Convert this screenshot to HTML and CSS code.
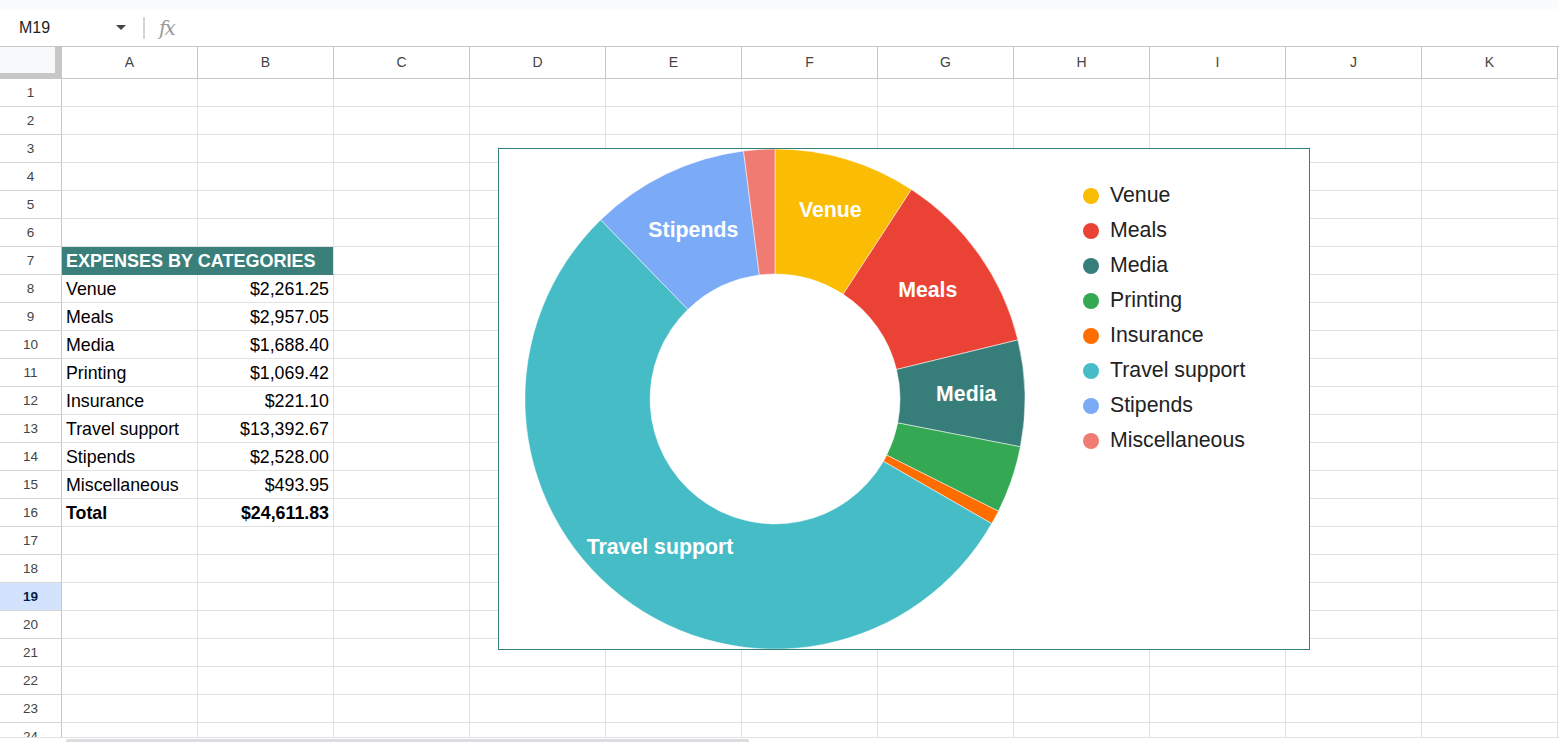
FILE: index.html
```html
<!DOCTYPE html>
<html lang="en">
    <head>
        <meta charset="UTF-8" />
        <meta name="viewport" content="width=device-width, initial-scale=1.0" />
        <title>Expenses</title>
        <link rel="stylesheet" href="styles.css">
    </head>
    <body>
        <div class="top-strip"></div>
        <!-- name box + formula input -->
        <div class="formula-bar">
            <span class="name-box">M19</span>
            <span class="caret"></span>
            <span class="divider"></span>
            <span class="fx">fx</span>
        </div>

        <div class="sheet">
            <div class="row col-heads">
                <div class="corner"></div>
                <div>A</div><div>B</div><div>C</div><div>D</div><div>E</div><div>F</div>
                <div>G</div><div>H</div><div>I</div><div>J</div><div>K</div>
            </div>
            <div class="row"><div class="rh">1</div><div></div><div></div><div></div><div></div><div></div><div></div><div></div><div></div><div></div><div></div><div></div></div>
            <div class="row"><div class="rh">2</div><div></div><div></div><div></div><div></div><div></div><div></div><div></div><div></div><div></div><div></div><div></div></div>
            <div class="row"><div class="rh">3</div><div></div><div></div><div></div><div></div><div></div><div></div><div></div><div></div><div></div><div></div><div></div></div>
            <div class="row"><div class="rh">4</div><div></div><div></div><div></div><div></div><div></div><div></div><div></div><div></div><div></div><div></div><div></div></div>
            <div class="row"><div class="rh">5</div><div></div><div></div><div></div><div></div><div></div><div></div><div></div><div></div><div></div><div></div><div></div></div>
            <div class="row"><div class="rh">6</div><div></div><div></div><div></div><div></div><div></div><div></div><div></div><div></div><div></div><div></div><div></div></div>
            <div class="row"><div class="rh">7</div><div class="c title">EXPENSES BY CATEGORIES</div><div></div><div></div><div></div><div></div><div></div><div></div><div></div><div></div><div></div></div>
            <div class="row"><div class="rh">8</div><div class="c">Venue</div><div class="c num">$2,261.25</div><div></div><div></div><div></div><div></div><div></div><div></div><div></div><div></div><div></div></div>
            <div class="row"><div class="rh">9</div><div class="c">Meals</div><div class="c num">$2,957.05</div><div></div><div></div><div></div><div></div><div></div><div></div><div></div><div></div><div></div></div>
            <div class="row"><div class="rh">10</div><div class="c">Media</div><div class="c num">$1,688.40</div><div></div><div></div><div></div><div></div><div></div><div></div><div></div><div></div><div></div></div>
            <div class="row"><div class="rh">11</div><div class="c">Printing</div><div class="c num">$1,069.42</div><div></div><div></div><div></div><div></div><div></div><div></div><div></div><div></div><div></div></div>
            <div class="row"><div class="rh">12</div><div class="c">Insurance</div><div class="c num">$221.10</div><div></div><div></div><div></div><div></div><div></div><div></div><div></div><div></div><div></div></div>
            <div class="row"><div class="rh">13</div><div class="c">Travel support</div><div class="c num">$13,392.67</div><div></div><div></div><div></div><div></div><div></div><div></div><div></div><div></div><div></div></div>
            <div class="row"><div class="rh">14</div><div class="c">Stipends</div><div class="c num">$2,528.00</div><div></div><div></div><div></div><div></div><div></div><div></div><div></div><div></div><div></div></div>
            <div class="row"><div class="rh">15</div><div class="c">Miscellaneous</div><div class="c num">$493.95</div><div></div><div></div><div></div><div></div><div></div><div></div><div></div><div></div><div></div></div>
            <div class="row total"><div class="rh">16</div><div class="c">Total</div><div class="c num">$24,611.83</div><div></div><div></div><div></div><div></div><div></div><div></div><div></div><div></div><div></div></div>
            <div class="row"><div class="rh">17</div><div></div><div></div><div></div><div></div><div></div><div></div><div></div><div></div><div></div><div></div><div></div></div>
            <div class="row"><div class="rh">18</div><div></div><div></div><div></div><div></div><div></div><div></div><div></div><div></div><div></div><div></div><div></div></div>
            <div class="row"><div class="rh selected">19</div><div></div><div></div><div></div><div></div><div></div><div></div><div></div><div></div><div></div><div></div><div></div></div>
            <div class="row"><div class="rh">20</div><div></div><div></div><div></div><div></div><div></div><div></div><div></div><div></div><div></div><div></div><div></div></div>
            <div class="row"><div class="rh">21</div><div></div><div></div><div></div><div></div><div></div><div></div><div></div><div></div><div></div><div></div><div></div></div>
            <div class="row"><div class="rh">22</div><div></div><div></div><div></div><div></div><div></div><div></div><div></div><div></div><div></div><div></div><div></div></div>
            <div class="row"><div class="rh">23</div><div></div><div></div><div></div><div></div><div></div><div></div><div></div><div></div><div></div><div></div><div></div></div>
            <div class="row"><div class="rh">24</div><div></div><div></div><div></div><div></div><div></div><div></div><div></div><div></div><div></div><div></div><div></div></div>

            <!-- floating donut chart -->
            <div class="chart">
                <svg class="donut" width="500" height="500" viewBox="0 0 500 500">
                    <g stroke="#fff" stroke-width="0.5">
                        <path fill="#fbbc04" d="M250 0 A250 250 0 0 1 386.45 40.5 L318.2 145.25 A125 125 0 0 0 250 125 Z" />
                        <path fill="#ea4335" d="M386.45 40.5 A250 250 0 0 1 492.9 190.9 L371.5 220.5 A125 125 0 0 0 318.2 145.25 Z" />
                        <path fill="#377e7b" d="M492.9 190.9 A250 250 0 0 1 495.4 297.8 L372.7 273.9 A125 125 0 0 0 371.5 220.5 Z" />
                        <path fill="#34a853" d="M495.4 297.8 A250 250 0 0 1 473.4 362.2 L361.7 306.1 A125 125 0 0 0 372.7 273.9 Z" />
                        <path fill="#ff6d01" d="M473.4 362.2 A250 250 0 0 1 466.7 374.6 L358.4 312.3 A125 125 0 0 0 361.7 306.1 Z" />
                        <path fill="#46bdc6" d="M466.7 374.6 A250 250 0 1 1 75.7 70.8 L162.85 160.4 A125 125 0 1 0 358.4 312.3 Z" />
                        <path fill="#7baaf7" d="M75.7 70.8 A250 250 0 0 1 218.55 2 L234.3 126 A125 125 0 0 0 162.85 160.4 Z" />
                        <path fill="#f07b72" d="M218.55 2 A250 250 0 0 1 250 0 L250 125 A125 125 0 0 0 234.3 126 Z" />
                    </g>
                    <g class="slice-labels">
                        <text x="305.3" y="68.3">Venue</text>
                        <text x="402.8" y="147.7">Meals</text>
                        <text x="441.3" y="251.7">Media</text>
                        <text x="135" y="405">Travel support</text>
                        <text x="168.3" y="87.7">Stipends</text>
                    </g>
                </svg>
                <ul class="legend">
                    <li><span class="dot venue"></span>Venue</li>
                    <li><span class="dot meals"></span>Meals</li>
                    <li><span class="dot media"></span>Media</li>
                    <li><span class="dot printing"></span>Printing</li>
                    <li><span class="dot insurance"></span>Insurance</li>
                    <li><span class="dot travel"></span>Travel support</li>
                    <li><span class="dot stipends"></span>Stipends</li>
                    <li><span class="dot misc"></span>Miscellaneous</li>
                </ul>
            </div>

            <div class="hscroll"><div class="thumb"></div></div>
        </div>
    </body>
</html>
```

FILE: styles.css
```css
body {
    margin: 0;
    font-family: "Liberation Sans", Arial, sans-serif;
    background-color: #fff;
    overflow: hidden;
}
.top-strip {
    height: 9px;
    background-color: #f9fbfd;
}

/* formula bar */
.formula-bar {
    height: 37px;
    display: flex;
    align-items: center;
}
.name-box {
    width: 97px;
    padding-left: 19px;
    font-size: 16px;
    color: #1f1f1f;
}
.caret {
    width: 0;
    height: 0;
    border-left: 5px solid transparent;
    border-right: 5px solid transparent;
    border-top: 5px solid #444;
}
.divider {
    width: 2px;
    height: 22px;
    margin-left: 17px;
    background-color: #d3d5d6;
}
.fx {
    margin-left: 14px;
    font-family: "DejaVu Serif", "Liberation Serif", serif;
    font-style: italic;
    font-size: 20px;
    color: #9a9a9a;
    letter-spacing: -2px;
}

/* grid */
.sheet {
    position: relative;
    height: 695px;
    overflow: hidden;
    border-top: 1px solid #c7c7c7;
}
.row {
    display: grid;
    grid-template-columns: 62px repeat(11, 136px);
    grid-template-rows: 28px;
    height: 28px;
}
.row > div {
    box-sizing: border-box;
    border-right: 1px solid #e1e1e1;
    border-bottom: 1px solid #e1e1e1;
    overflow: visible;
}
.col-heads {
    grid-template-rows: 32px;
    height: 32px;
}
.col-heads > div {
    border-color: #c7c7c7;
    text-align: center;
    font-size: 14px;
    line-height: 31px;
    color: #444;
}
.col-heads > .corner {
    background-color: #f8f9fa;
    border-right: 7px solid #c7c7c7;
    border-bottom: 6px solid #c7c7c7;
}
.rh {
    border-right-color: #c7c7c7 !important;
    border-bottom-color: #d6d6d6 !important;
    text-align: center;
    font-size: 13.5px;
    line-height: 27px;
    color: #444;
}
.rh.selected {
    background-color: #d3e3fd;
    color: #041e49;
    font-weight: bold;
}
.c {
    padding: 1px 4px 0;
    font-size: 17.8px;
    line-height: 26px;
    color: #000;
    white-space: nowrap;
}
.c.num {
    text-align: right;
}
.c.title {
    grid-column: span 2;
    background-color: #3a7f7a;
    color: #fff;
    font-weight: bold;
    font-size: 18px;
    border-bottom-color: #3a7f7a;
}
.total .c {
    font-weight: bold;
}

/* chart object */
.chart {
    position: absolute;
    left: 498px;
    top: 101px;
    width: 812px;
    height: 502px;
    box-sizing: border-box;
    border: 1px solid #36807a;
    background-color: #fff;
    display: flex;
    padding-left: 26px;
}
.donut {
    flex: none;
}
.slice-labels text {
    fill: #fff;
    font-family: "Liberation Sans", Arial, sans-serif;
    font-weight: bold;
    font-size: 21.3px;
    text-anchor: middle;
}
.legend {
    list-style: none;
    margin: 0;
    padding: 29px 0 0 58px;
}
.legend li {
    display: flex;
    align-items: center;
    height: 35px;
    font-size: 21.3px;
    color: #222;
}
.dot {
    width: 16px;
    height: 16px;
    border-radius: 50%;
    margin-right: 11px;
}
.dot.venue { background-color: #fbbc04; }
.dot.meals { background-color: #ea4335; }
.dot.media { background-color: #377e7b; }
.dot.printing { background-color: #34a853; }
.dot.insurance { background-color: #ff6d01; }
.dot.travel { background-color: #46bdc6; }
.dot.stipends { background-color: #7baaf7; }
.dot.misc { background-color: #f07b72; }

/* horizontal scrollbar */
.hscroll {
    position: absolute;
    left: 0;
    right: 0;
    top: 690px;
    height: 5px;
    border-top: 1px solid #e1e1e1;
    background-color: #fff;
}
.hscroll .thumb {
    margin-left: 66px;
    margin-top: 1px;
    width: 683px;
    height: 4px;
    border-radius: 2px;
    background-color: #dadce0;
}
```
